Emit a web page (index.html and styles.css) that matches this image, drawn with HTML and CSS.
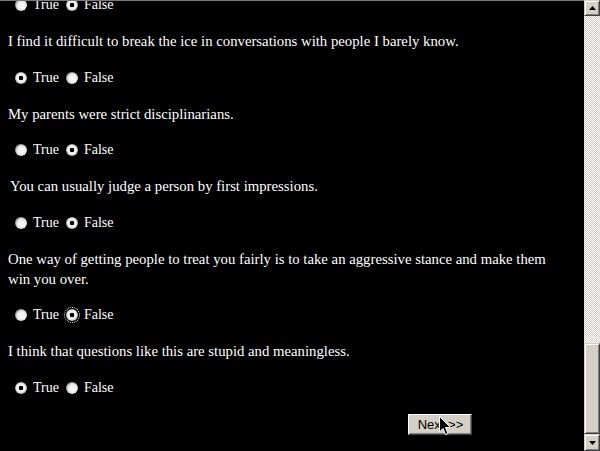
FILE: index.html
```html
<!DOCTYPE html>
<html>
<head>
<meta charset="utf-8">
<link rel="stylesheet" href="styles.css">
</head>
<body>
<div class="window">
  <div class="content">
    <div class="inner">
      <div class="row first">
        <input type="radio" name="q0"><span class="lbl">True</span>
        <input type="radio" name="q0" checked><span class="lbl">False</span>
      </div>
      <p class="q">I find it difficult to break the ice in conversations with people I barely know.</p>
      <div class="row">
        <input type="radio" name="q1" checked><span class="lbl">True</span>
        <input type="radio" name="q1"><span class="lbl">False</span>
      </div>
      <p class="q">My parents were strict disciplinarians.</p>
      <div class="row">
        <input type="radio" name="q2"><span class="lbl">True</span>
        <input type="radio" name="q2" checked><span class="lbl">False</span>
      </div>
      <p class="q indent">You can usually judge a person by first impressions.</p>
      <div class="row">
        <input type="radio" name="q3"><span class="lbl">True</span>
        <input type="radio" name="q3" checked><span class="lbl">False</span>
      </div>
      <p class="q">One way of getting people to treat you fairly is to take an aggressive stance and make them win you over.</p>
      <div class="row">
        <input type="radio" name="q4"><span class="lbl">True</span>
        <input type="radio" name="q4" class="focus" checked><span class="lbl">False</span>
      </div>
      <p class="q">I think that questions like this are stupid and meaningless.</p>
      <div class="row">
        <input type="radio" name="q5" checked><span class="lbl">True</span>
        <input type="radio" name="q5"><span class="lbl">False</span>
      </div>
      <div class="actions">
        <button class="next" type="button">Next &gt;&gt;</button>
        <svg class="cursor" width="13" height="20" viewBox="0 0 13 20">
          <path d="M0.5 0.5 L0.5 16 L4 12.5 L6.5 18.5 L9 17.5 L6.5 11.5 L11.5 11.5 Z" fill="#000" stroke="#fff" stroke-width="1"/>
        </svg>
      </div>
    </div>
  </div>
  <div class="scrollbar">
    <div class="sbtn">
      <svg width="7" height="4" viewBox="0 0 7 4"><path d="M3.5 0 L7 4 L0 4 Z" fill="#000"/></svg>
    </div>
    <div class="track">
      <div class="spacer"></div>
      <div class="thumb"></div>
    </div>
    <div class="sbtn down">
      <svg width="7" height="4" viewBox="0 0 7 4"><path d="M0 0 L7 0 L3.5 4 Z" fill="#000"/></svg>
    </div>
  </div>
</div>
</body>
</html>
```

FILE: styles.css
```css
html, body {
  margin: 0;
  padding: 0;
  background: #000;
}

.window {
  display: flex;
  width: 600px;
  height: 451px;
  overflow: hidden;
}

.content {
  flex: 1;
  overflow: hidden;
  border-top: 1px solid #7a7a7a;
  padding: 0 20px 0 8px;
  color: #fff;
  font-family: "Liberation Serif", "Times New Roman", serif;
  font-size: 14px;
  line-height: 20px;
}

.inner {
  display: flex;
  flex-direction: column;
  gap: 16.25px;
  margin-top: -6px;
}

.q {
  margin: 0;
  font-size: 14.75px;
}

.q.indent {
  padding-left: 2px;
}

.row {
  display: flex;
  align-items: center;
  height: 20px;
  padding-left: 7px;
}

.row input {
  appearance: none;
  -webkit-appearance: none;
  width: 12px;
  height: 12px;
  margin: 0;
  border-radius: 50%;
  background: radial-gradient(circle at 55% 55%, #f4f4f4 0 3px, #dcdcdc 5px, #a0a0a0 6px);
  flex: none;
}

.row input:checked {
  background: radial-gradient(circle at 50% 50%, #000 0 2px, #f4f4f4 2.6px 4px, #d8d8d8 5px, #9c9c9c 6px);
}

.row input.focus {
  outline: 1px dotted #ffffff;
  outline-offset: 1px;
}

.row .lbl {
  margin-left: 6px;
  margin-right: 7px;
}

.actions {
  position: relative;
  padding-left: 400px;
  height: 21px;
}

.next {
  width: 64px;
  height: 21px;
  margin: 0;
  padding: 0 0 0 1px;
  background: #d4d0c8;
  color: #000;
  font-family: "Liberation Sans", Arial, sans-serif;
  font-size: 13px;
  border: 1px solid;
  border-color: #fff #404040 #404040 #fff;
  box-shadow: inset -1px -1px 0 #808080;
}

.cursor {
  position: absolute;
  left: 431px;
  top: 2px;
}

.scrollbar {
  width: 16px;
  flex: none;
  display: flex;
  flex-direction: column;
  height: 451px;
}

.sbtn {
  height: 16px;
  box-sizing: border-box;
  background: #d4d0c8;
  border: 1px solid;
  border-color: #d4d0c8 #404040 #404040 #d4d0c8;
  box-shadow: inset 1px 1px 0 #fff, inset -1px -1px 0 #808080;
  display: flex;
  align-items: center;
  justify-content: center;
  flex: none;
}

.sbtn.down {
  height: 17px;
}

.track {
  flex: 1;
  display: flex;
  flex-direction: column;
  background-color: #f4f3f0;
  background-image: repeating-conic-gradient(#d4d0c8 0 25%, #ffffff 0 50%);
  background-size: 2px 2px;
}

.spacer {
  flex: 1;
}

.thumb {
  height: 91px;
  box-sizing: border-box;
  background: #d4d0c8;
  border: 1px solid;
  border-color: #d4d0c8 #404040 #404040 #d4d0c8;
  box-shadow: inset 1px 1px 0 #fff, inset -1px -1px 0 #808080;
}
```
